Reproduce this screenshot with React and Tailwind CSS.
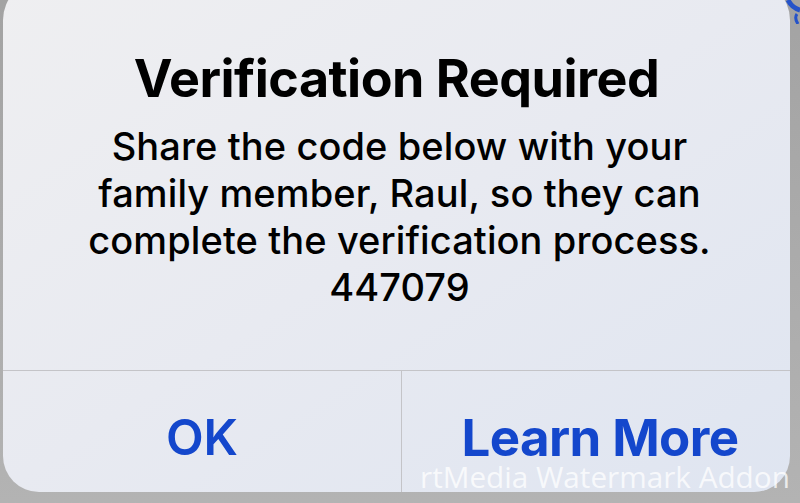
export default function App() {
  return (
    <div className="relative w-[800px] h-[503px] overflow-hidden bg-gradient-to-b from-[#a3a3a3] to-[#b3b3b3] font-['Inter',sans-serif]">
      {/* alert sheet */}
      <div className="absolute left-[3px] top-[-20px] w-[787px] h-[512px] rounded-[40px] rounded-b-[36px] overflow-hidden bg-gradient-to-br from-[#efeff1] via-[#e8eaf1] to-[#dfe5f1] flex flex-col">
        <div className="h-[390px] flex flex-col items-center pt-[69px] text-black">
          <h1 className="text-[52px] leading-[60px] font-bold tracking-[-0.5px]">Verification Required</h1>
          <p className="mt-[14px] pl-[6px] text-[38px] leading-[47px] font-medium text-center tracking-[0.1px]">
            Share the code below with your
            <br />
            family member, Raul, so they can
            <br />
            complete the verification process.
            <br />
            447079
          </p>
        </div>
        <div className="flex-1 flex border-t border-[#c4c4c8]">
          <button className="w-[398px] flex items-center justify-center pt-[12px] text-[49px] leading-[40px] font-semibold text-[#1447cc]">
            OK
          </button>
          <button className="flex-1 flex items-center justify-center pt-[12px] pl-[8px] border-l border-[#c4c4c8] text-[51px] leading-[40px] font-bold tracking-[-0.6px] text-[#1447cc]">
            Learn More
          </button>
        </div>
      </div>

      {/* watermark */}
      <span className="absolute left-[420px] top-[464px] text-[29.7px] leading-[26px] text-white/75 font-['Open_Sans',sans-serif] whitespace-nowrap">
        rtMedia Watermark Addon
      </span>

      {/* corner of an icon behind the sheet */}
      <svg className="absolute right-0 top-0" width="18" height="24" viewBox="0 0 18 24">
        <path d="M6 0 Q10 8 18 10" stroke="#2553c9" strokeWidth="5" fill="none" />
        <path d="M15 14 Q12 18 16 24" stroke="#2553c9" strokeWidth="3" fill="none" />
      </svg>
    </div>
  );
}
